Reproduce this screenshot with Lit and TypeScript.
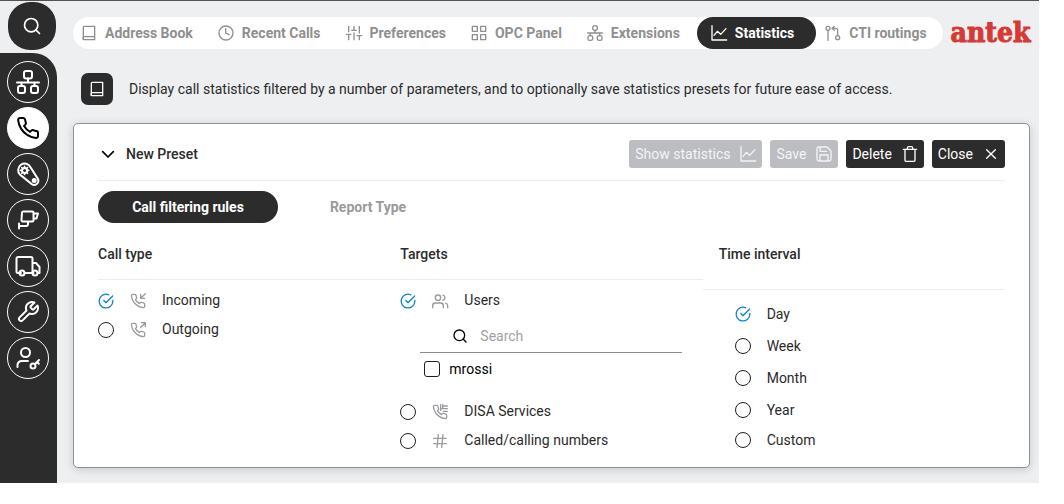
import { LitElement, html, css, svg, nothing } from "lit";
import { customElement, property, state } from "lit/decorators.js";
import { classMap } from "lit/directives/class-map.js";

const PHONE = "M22 16.92v3a2 2 0 0 1-2.18 2 19.79 19.79 0 0 1-8.63-3.07 19.5 19.5 0 0 1-6-6 19.79 19.79 0 0 1-3.07-8.67A2 2 0 0 1 4.11 2h3a2 2 0 0 1 2 1.72 12.84 12.84 0 0 0 .7 2.81 2 2 0 0 1-.45 2.11L8.09 9.91a16 16 0 0 0 6 6l1.27-1.27a2 2 0 0 1 2.11-.45 12.84 12.84 0 0 0 2.81.7A2 2 0 0 1 22 16.92z";

const ICONS: Record<string, unknown> = {
  search: svg`<circle cx="11" cy="11" r="8"/><path d="M21 21l-4.4-4.4"/>`,
  network: svg`<rect x="8" y="1" width="8" height="7.5" rx="2"/><rect x="2" y="16" width="7" height="7" rx="2"/><rect x="15" y="16" width="7" height="7" rx="2"/><path d="M12 8.500v4M1 12.500h22M5.500 12.500V16M18.500 12.500V16"/>`,
  extensions: svg`<circle cx="12" cy="4.500" r="3.500"/><rect x="1.500" y="16" width="7" height="7" rx="2.500"/><rect x="15.500" y="16" width="7" height="7" rx="2.500"/><path d="M12 8v4M1 12h22M5 12v4M19 12v4"/>`,
  phone: svg`<path d=${PHONE}/>`,
  gear: svg`<path d="M14.500 5.200A6.500 6.500 0 1 0 4 12.600L15.600 22a4.200 4.200 0 0 0 6.400-5Z"/><circle cx="8.600" cy="8.400" r="2.500"/><path d="M8.600 4.300v1.600M8.600 10.900v1.600M4.500 8.400h1.600M11.100 8.400h1.600M5.700 5.500l1.100 1.100M10.400 10.200l1.100 1.100M11.500 5.500l-1.100 1.100M6.800 10.200l-1.100 1.100" stroke-width="1.600"/><circle cx="18.200" cy="18.400" r="1.500" fill="currentColor"/>`,
  camera: svg`<path d="M7.500 3.500h9a1 1 0 0 1 1 1v8a1 1 0 0 1-1 1H7a1.500 1.500 0 0 1-1.500-1.700l.5-7A1.400 1.400 0 0 1 7.500 3.500zM17.500 5.500h4.500l-1.500 5h-3M12 13.500V16a2 2 0 0 1-2 2H3M3 15.500v5"/>`,
  truck: svg`<path d="M5 19H2a1.500 1.500 0 0 1-1.500-1.500v-13A1.500 1.500 0 0 1 2 3h13a1.500 1.500 0 0 1 1.500 1.500V19H8.500M16.500 9h3.500l3.500 4v6h-2M16.500 19h1"/><circle cx="6" cy="19" r="2.500"/><circle cx="19" cy="19" r="2.500"/>`,
  tool: svg`<path d="M14.700 6.300a1 1 0 0 0 0 1.400l1.600 1.600a1 1 0 0 0 1.400 0l3.770-3.770a6 6 0 0 1-7.940 7.940l-6.910 6.910a2.120 2.120 0 0 1-3-3l6.910-6.910a6 6 0 0 1 7.940-7.940l-3.760 3.760z"/>`,
  userKey: svg`<circle cx="9.500" cy="6.500" r="4.500"/><path d="M1.500 21v-2a4 4 0 0 1 4-4h6.500"/><circle cx="17" cy="20" r="2.500"/><path d="M19 18l4-4M21 16l1.800 1.800"/>`,
  book: svg`<path d="M3.500 20.500V3.500A1.500 1.500 0 0 1 5 2h15.500v20H5a1.500 1.500 0 0 1 0-4.500h15.500"/>`,
  clock: svg`<circle cx="12" cy="12" r="10.500"/><path d="M11.500 5.500V12l5 2.500"/>`,
  sliders: svg`<path d="M4 22v-8M4 10V2M12 22V12M12 8V2M20 22v-6M20 12V2M0.500 14h7M8.500 8h7M16.500 16h7"/>`,
  grid: svg`<rect x="2" y="2" width="7.500" height="7.500"/><rect x="14.500" y="2" width="7.500" height="7.500"/><rect x="14.500" y="14.500" width="7.500" height="7.500"/><rect x="2" y="14.500" width="7.500" height="7.500"/>`,
  chart: svg`<path d="M1.500 1v21.500H23.500M4.500 15.500l5-6 5 4.500 8-8.500"/>`,
  route: svg`<circle cx="4.500" cy="5" r="3"/><circle cx="19" cy="19" r="3"/><path d="M4.500 8v15M19 16V8a3 3 0 0 0-3-3h-5M14 2l-3.500 3L14 8"/>`,
  save: svg`<path d="M20 22.500H4A2.500 2.500 0 0 1 1.500 20V4A2.500 2.500 0 0 1 4 1.500h12.500l6 6V20a2.500 2.500 0 0 1-2.500 2.500zM18 22v-8.500H6V22M6 2v6h10"/>`,
  trash: svg`<path d="M2 5h20M4.500 5v16.500a1.500 1.500 0 0 0 1.500 1.500h12a1.500 1.500 0 0 0 1.500-1.500V5M8 5V3a2 2 0 0 1 2-2h4a2 2 0 0 1 2 2v2"/>`,
  close: svg`<path d="M18.500 5.500l-13 13M5.500 5.500l13 13"/>`,
  chevron: svg`<path d="M4 8.500l8 8 8-8"/>`,
  check: svg`<path d="M22.300 11.200v.9a10.300 10.300 0 1 1-6.100-9.400M22 4.500L12 14.500l-3.200-3.200"/>`,
  incoming: svg`<path d="M16 2v6h6M23 1l-7 7"/><path d=${PHONE}/>`,
  outgoing: svg`<path d="M23 7V1h-6M16 8l7-7"/><path d=${PHONE}/>`,
  disa: svg`<path d=${PHONE}/><path d="M13 1v8.500M16 1v5M16 3h7M13 7h10M17 11h6"/>`,
  users: svg`<path d="M17 22v-3a4 4 0 0 0-4-4H5a4 4 0 0 0-4 4v3"/><circle cx="9" cy="7" r="4"/><path d="M23.500 22v-3a4 4 0 0 0-3-3.870M16.500 3.130a4 4 0 0 1 0 7.750"/>`,
  hash: svg`<path d="M2.500 8h19M2.500 16h19M9.500 2.500l-2 19M16.500 2.500l-2 19"/>`,
};

@customElement("line-icon")
class LineIcon extends LitElement {
  @property() name = "";
  @property({ type: Number }) weight = 2;

  static styles = css`
    :host { display: block; flex: none; width: 16px; height: 16px; }
    .glyph {
      display: block; width: 100%; height: 100%; overflow: visible;
      fill: none; stroke: currentColor; stroke-linecap: round; stroke-linejoin: round;
    }
  `;

  render() {
    return html`<svg class="glyph" viewBox="0 0 24 24" stroke-width=${this.weight} aria-hidden="true">${ICONS[this.name]}</svg>`;
  }
}

@customElement("app-root")
class AppRoot extends LitElement {
  @state() private selected: Record<string, string> = { call: "Incoming", target: "Users", time: "Day" };

  static styles = css`
    :host {
      display: block; padding: 0 25px 21px 0; background: #fff; color: #2b2b2b;
      font: 14px/20px Roboto, "Liberation Sans", sans-serif;
    }
    *, *::before { box-sizing: border-box; }
    button, input { font: inherit; color: inherit; margin: 0; }
    button { border: 0; padding: 0; cursor: pointer; }
    h1, h2, p { margin: 0; font: inherit; }

    .shell { display: flex; background: #eeeff1; border-top: 1px solid #525257; }
    .side { flex: none; width: 57px; display: flex; flex-direction: column; gap: 3px; padding-top: 1px; }
    .find {
      align-self: flex-end; margin-right: 1px; width: 48px; height: 48px; border-radius: 22px;
      display: grid; place-items: center; background: #2c2c2c; color: #fff;
    }
    .find line-icon { width: 20px; height: 20px; }
    .rail {
      flex: 1; display: flex; flex-direction: column; gap: 4px; padding: 8px 8px 8px 7px;
      background: #2c2c2c; border-top-right-radius: 24px;
    }
    .spot {
      width: 42px; height: 42px; border-radius: 50%; border: 1px solid #fff;
      display: grid; place-items: center; color: #fff; background: none;
    }
    .spot.on { background: #fff; color: #000; }
    .spot line-icon { width: 24px; height: 24px; }

    .main { flex: 1; min-width: 0; padding: 16px 9px 15px 16px; }
    .top { display: flex; align-items: center; gap: 8px; }
    .nav { flex: 1; display: flex; gap: 1px; height: 32px; border-radius: 16px; background: #fff; }
    .link {
      display: flex; align-items: center; gap: 8px; padding: 0 16px 0 8px; border-radius: 16px;
      color: #8f8f8f; font-weight: 700; text-decoration: none; white-space: nowrap;
    }
    .link.on { padding: 0 22px 0 14px; background: #2c2c2c; color: #fff; }
    .logo {
      flex: none; width: 80px; color: #d63a34; -webkit-text-stroke: 1px #d63a34;
      font: 700 28px/32px "DejaVu Serif Condensed", "DejaVu Serif", serif;
    }

    .about { display: flex; align-items: center; gap: 16px; padding: 24px 8px 18px; }
    .badge {
      flex: none; width: 32px; height: 32px; border-radius: 7px;
      display: grid; place-items: center; background: #2c2c2c; color: #fff;
    }

    .card {
      padding: 16px 24px 12px; background: #fff; border: 1px solid #8e9095; border-radius: 5px;
      box-shadow: 0 2px 10px rgba(0, 0, 0, 0.16);
    }
    .head { display: flex; align-items: center; gap: 8px; padding-bottom: 12px; border-bottom: 1px solid #ececec; }
    .toggle { display: flex; align-items: center; gap: 10px; margin-right: auto; padding-left: 2px; background: none; font-weight: 500; }
    .toggle line-icon { color: #000; }
    .action {
      display: flex; align-items: center; gap: 10px; height: 28px; padding: 0 6px;
      border-radius: 3px; background: #2c2c2c; color: #fff; white-space: nowrap;
    }
    .action:disabled { background: #bbbdc1; color: #f4f4f5; }

    .tabs { display: flex; padding: 10px 0; }
    .tab { width: 180px; height: 32px; border-radius: 16px; background: none; color: #9a9a9a; font-weight: 700; }
    .tab.on { background: #2c2c2c; color: #fff; }

    .cols { display: grid; grid-template-columns: repeat(3, 1fr); align-items: start; }
    .title { height: 47px; padding-top: 11px; border-bottom: 1px solid #ececec; font-weight: 500; }
    .late .title { height: 57px; padding-left: 16px; }
    .list { padding-top: 6px; }
    .late .list { padding: 8px 0 0 32px; }
    .row { display: flex; align-items: center; gap: 16px; width: fit-content; height: 29px; }
    .name { padding-bottom: 2px; }
    .late .name { padding-bottom: 0; }
    .late .row { height: 32px; }
    .late .row:last-child { height: 28px; }
    .row > line-icon { color: #9a9a9f; }
    .mark { display: grid; width: 16px; height: 16px; color: #0a84d0; }
    .mark > * { grid-area: 1 / 1; }
    .radio { appearance: none; width: 16px; height: 16px; border: 1px solid #1e1e1e; border-radius: 50%; }
    .radio:checked { border-color: transparent; }

    .users { margin: 0 21px 12px 20px; }
    .seek { display: flex; align-items: center; gap: 12px; height: 38px; padding: 4px 0 0 32px; border-bottom: 1px solid #8c8c8c; color: #000; }
    .field { flex: 1; min-width: 0; border: 0; outline: 0; padding: 0; background: none; }
    .field::placeholder { color: #a2a2a2; opacity: 1; }
    .pick { display: flex; align-items: center; gap: 9px; height: 32px; padding-left: 4px; color: #000; width: fit-content; }
    .box { appearance: none; width: 16px; height: 16px; border: 1px solid #1e1e1e; border-radius: 3px; }
    .box:checked { background: #0a84d0; }
  `;

  private link(icon: string, label: string, on = false) {
    return html`<a class=${classMap({ link: true, on })} href="#"><line-icon name=${icon}></line-icon>${label}</a>`;
  }

  private spot(icon: string, label: string, on = false) {
    return html`<button class=${classMap({ spot: true, on })} aria-label=${label}><line-icon name=${icon}></line-icon></button>`;
  }

  private action(label: string, icon: string, disabled = false) {
    return html`<button class="action" ?disabled=${disabled}>${label}<line-icon name=${icon}></line-icon></button>`;
  }

  private option(group: string, label: string, icon = "") {
    const checked = this.selected[group] === label;
    return html`<label class="row">
      <span class="mark">
        <input class="radio" type="radio" name=${group} .checked=${checked}
          @change=${() => (this.selected = { ...this.selected, [group]: label })} />
        ${checked ? html`<line-icon name="check"></line-icon>` : nothing}
      </span>
      ${icon ? html`<line-icon name=${icon}></line-icon>` : nothing}
      <span class="name">${label}</span>
    </label>`;
  }

  render() {
    return html`<div class="shell">
      <aside class="side">
        <button class="find" aria-label="Search"><line-icon name="search"></line-icon></button>
        <div class="rail">
          ${this.spot("network", "Network")}
          ${this.spot("phone", "Calls", true)}
          ${this.spot("gear", "Automation")}
          ${this.spot("camera", "Cameras")}
          ${this.spot("truck", "Vehicles")}
          ${this.spot("tool", "Tools")}
          ${this.spot("userKey", "Access")}
        </div>
      </aside>
      <main class="main">
        <header class="top">
          <nav class="nav">
            ${this.link("book", "Address Book")}
            ${this.link("clock", "Recent Calls")}
            ${this.link("sliders", "Preferences")}
            ${this.link("grid", "OPC Panel")}
            ${this.link("extensions", "Extensions")}
            ${this.link("chart", "Statistics", true)}
            ${this.link("route", "CTI routings")}
          </nav>
          <div class="logo">antek</div>
        </header>
        <div class="about">
          <span class="badge"><line-icon name="book"></line-icon></span>
          <p>Display call statistics filtered by a number of parameters, and to optionally save statistics presets for future ease of access.</p>
        </div>
        <section class="card">
          <div class="head">
            <button class="toggle" aria-expanded="true"><line-icon name="chevron" weight="2.500"></line-icon>New Preset</button>
            ${this.action("Show statistics", "chart", true)}
            ${this.action("Save", "save", true)}
            ${this.action("Delete", "trash")}
            ${this.action("Close", "close")}
          </div>
          <div class="tabs" role="tablist">
            <button class="tab on" role="tab" aria-selected="true">Call filtering rules</button>
            <button class="tab" role="tab" aria-selected="false">Report Type</button>
          </div>
          <div class="cols">
            <div>
              <h2 class="title">Call type</h2>
              <div class="list">
                ${this.option("call", "Incoming", "incoming")}
                ${this.option("call", "Outgoing", "outgoing")}
              </div>
            </div>
            <div>
              <h2 class="title">Targets</h2>
              <div class="list">
                ${this.option("target", "Users", "users")}
                <div class="users">
                  <div class="seek">
                    <line-icon name="search"></line-icon>
                    <input class="field" type="text" placeholder="Search" aria-label="Search users" />
                  </div>
                  <label class="pick"><input class="box" type="checkbox" />mrossi</label>
                </div>
                ${this.option("target", "DISA Services", "disa")}
                ${this.option("target", "Called/calling numbers", "hash")}
              </div>
            </div>
            <div class="late">
              <h2 class="title">Time interval</h2>
              <div class="list">
                ${["Day", "Week", "Month", "Year", "Custom"].map((d) => this.option("time", d))}
              </div>
            </div>
          </div>
        </section>
      </main>
    </div>`;
  }
}
